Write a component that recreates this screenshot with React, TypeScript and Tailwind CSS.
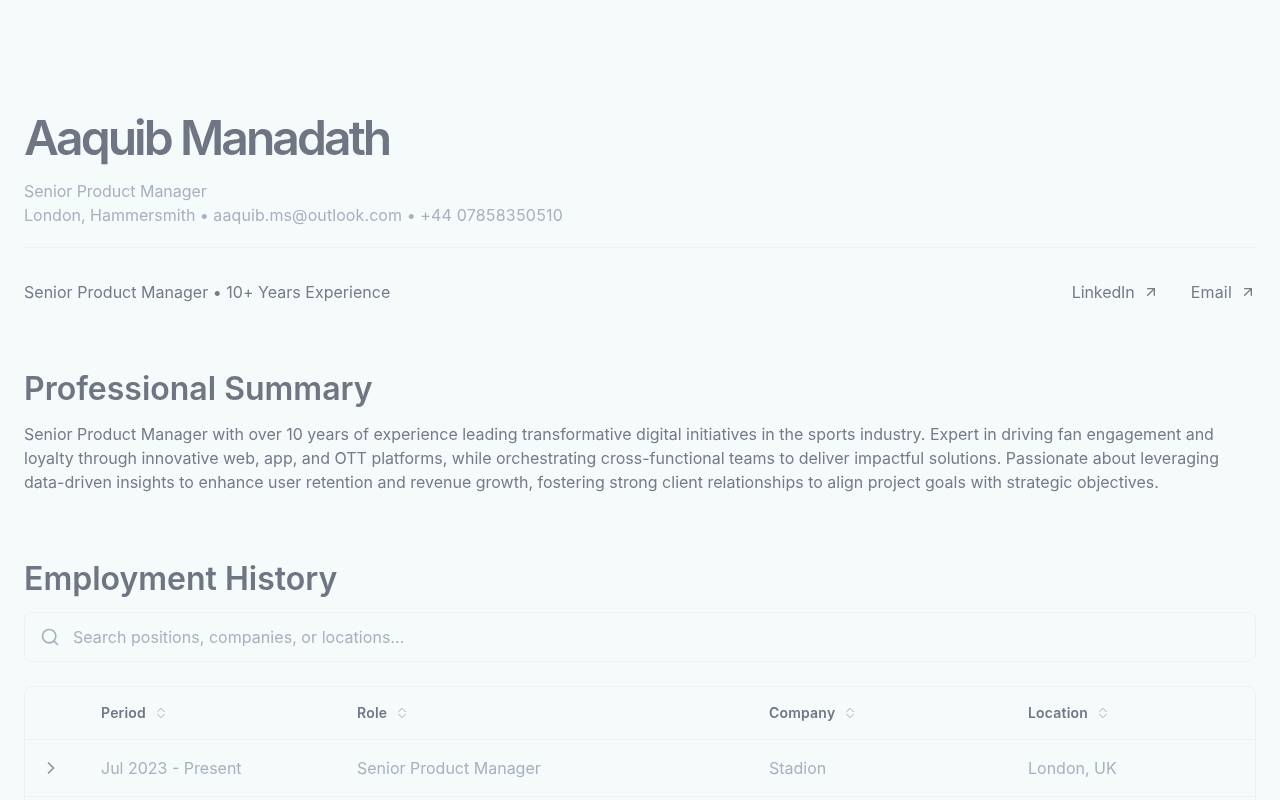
import { ArrowUpRight, ChevronRight, Search } from "lucide-react";

type Job = {
  period: string;
  role: string;
  company: string;
  location: string;
};

const jobs: Job[] = [
  {
    period: "Jul 2023 - Present",
    role: "Senior Product Manager",
    company: "Stadion",
    location: "London, UK",
  },
];

const tableCols = "grid grid-cols-[60px_256px_412px_259px_1fr]";

function SortIcon() {
  return (
    <svg
      width="16"
      height="16"
      viewBox="0 0 24 24"
      fill="none"
      stroke="currentColor"
      strokeWidth="1.5"
      strokeLinecap="round"
      strokeLinejoin="round"
      className="text-[#a3adbb]"
    >
      <path d="m7 14 5 5 5-5" />
      <path d="m7 10 5-5 5 5" />
    </svg>
  );
}

function HeadCell({ label }: { label: string }) {
  return (
    <div className="flex items-center gap-[7px] px-4 text-sm font-semibold tracking-[0.2px] text-[#717785]">
      <span>{label}</span>
      <SortIcon />
    </div>
  );
}

function ExternalLink({ label, tracking }: { label: string; tracking: string }) {
  return (
    <a href="#" className="flex items-center gap-2">
      <span className={tracking}>{label}</span>
      <ArrowUpRight size={16} strokeWidth={2} />
    </a>
  );
}

export default function App() {
  return (
    <div className="h-screen overflow-hidden bg-[#f5fafb]">
      <div className="px-6 pt-[108px] font-['Inter',sans-serif] text-base text-[#757b88] blur-[0.4px]">
        <header className="border-b border-[#eef2f4] pb-5">
          <h1 className="text-5xl leading-[60px] font-semibold tracking-[-0.061em] text-[#6f7583]">
            Aaquib Manadath
          </h1>
          <div className="mt-[11px] leading-6 text-[#a8b1be]">
            <p className="tracking-[-0.05px]">Senior Product Manager</p>
            <p>
              London, Hammersmith • <span className="tracking-[0.09px]">aaquib.ms@outlook.com</span> •{" "}
              <span className="tracking-[0.2px]">+44 07858350510</span>
            </p>
          </div>
        </header>

        <div className="mt-8 flex items-center justify-between leading-6">
          <p className="tracking-[0.02px]">Senior Product Manager • 10+ Years Experience</p>
          <div className="flex gap-8">
            <ExternalLink label="LinkedIn" tracking="tracking-[-0.1px]" />
            <ExternalLink label="Email" tracking="tracking-[0.2px]" />
          </div>
        </div>

        <section className="mt-[65px]">
          <h2 className="text-[32px] leading-10 font-semibold text-[#6f7583]">Professional Summary</h2>
          <p className="mt-[13px] leading-6">
            Senior Product Manager with over 10 years of experience leading
            transformative digital initiatives in the sports industry. Expert in
            driving fan engagement and loyalty through innovative web, app, and
            OTT platforms, while orchestrating cross-functional teams to deliver
            impactful solutions. Passionate about leveraging data-driven insights
            to enhance user retention and revenue growth, fostering strong client
            relationships to align project goals with strategic objectives.
          </p>
        </section>

        <section className="mt-[65px]">
          <h2 className="text-[32px] leading-10 font-semibold text-[#6f7583]">Employment History</h2>

          <div className="mt-[13px] flex h-[50px] items-center gap-[13px] rounded-lg border border-[#eef2f6] pr-4 pl-[15px] text-[#a8b1be]">
            <Search size={20} strokeWidth={2} />
            <span className="tracking-[0.05px]">Search positions, companies, or locations...</span>
          </div>

          <div className="mt-6 rounded-lg border border-[#eef2f6]">
            <div className={`${tableCols} h-[53px] items-center border-b border-[#eef2f6]`}>
              <div />
              <HeadCell label="Period" />
              <HeadCell label="Role" />
              <HeadCell label="Company" />
              <HeadCell label="Location" />
            </div>
            {jobs.map((job) => (
              <div
                key={job.period}
                className={`${tableCols} h-[57px] items-center border-b border-[#eef2f6] text-[#a8b1be]`}
              >
                <div className="pl-4 text-[#8b919e]">
                  <ChevronRight size={20} />
                </div>
                <div className="px-4">{job.period}</div>
                <div className="px-4">{job.role}</div>
                <div className="px-4">{job.company}</div>
                <div className="px-4">{job.location}</div>
              </div>
            ))}
            <div className="h-[57px]" />
          </div>
        </section>
      </div>
    </div>
  );
}
